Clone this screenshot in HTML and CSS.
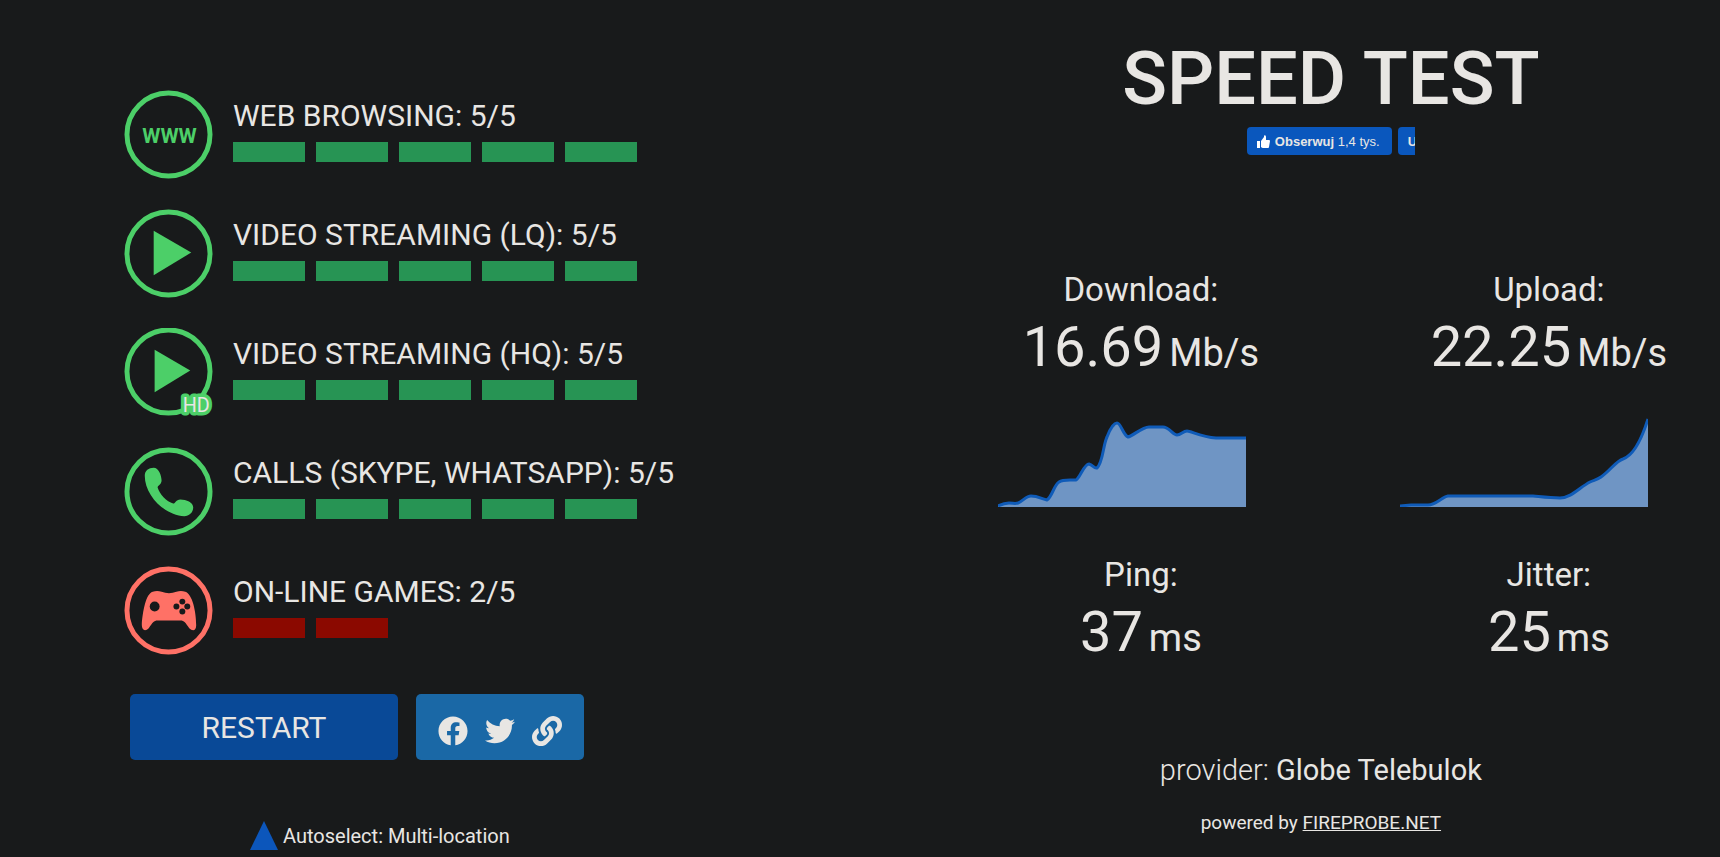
FILE: index.html
```html
<!DOCTYPE html>
<html lang="en">

<head>
    <meta charset="UTF-8">
    <meta name="viewport" content="width=device-width, initial-scale=1.0">
    <title>Speed Test</title>
    <link rel="stylesheet" href="styles.css">
</head>

<body>
    <div class="container">
        <main class="quality">
            <ul class="quality-list">
                <li class="quality-item">
                    <svg class="quality-icon" viewBox="0 0 90 90">
                        <circle class="ring" cx="45" cy="45" r="42" />
                        <text class="www" x="46" y="54">WWW</text>
                    </svg>
                    <div class="quality-info">
                        <h2>WEB BROWSING: 5/5</h2>
                        <div class="bars"><i></i><i></i><i></i><i></i><i></i></div>
                    </div>
                </li>
                <li class="quality-item">
                    <svg class="quality-icon" viewBox="0 0 90 90">
                        <circle class="ring" cx="45" cy="45" r="42" />
                        <path d="M30 22 L68 44 L30 67 Z" />
                    </svg>
                    <div class="quality-info">
                        <h2>VIDEO STREAMING (LQ): 5/5</h2>
                        <div class="bars"><i></i><i></i><i></i><i></i><i></i></div>
                    </div>
                </li>
                <li class="quality-item">
                    <svg class="quality-icon" viewBox="0 0 90 90">
                        <circle class="ring" cx="45" cy="44" r="42" />
                        <path d="M31 22 L67 43 L31 65 Z" />
                        <text class="hd" x="73" y="85">HD</text>
                    </svg>
                    <div class="quality-info">
                        <h2>VIDEO STREAMING (HQ): 5/5</h2>
                        <div class="bars"><i></i><i></i><i></i><i></i><i></i></div>
                    </div>
                </li>
                <li class="quality-item">
                    <svg class="quality-icon" viewBox="0 0 90 90">
                        <circle class="ring" cx="45" cy="45" r="42" />
                        <path d="M21 29 C21 24 25 21 30 21 C35 21 38 29 38 34 C38 38 34 39 34 41 C36 48 43 55 49 57 C52 58 52 53 57 53 C63 53 70 56 70 61 C70 66 66 70 61 70 C41 69 21 49 21 29 Z" />
                    </svg>
                    <div class="quality-info">
                        <h2>CALLS (SKYPE, WHATSAPP): 5/5</h2>
                        <div class="bars"><i></i><i></i><i></i><i></i><i></i></div>
                    </div>
                </li>
                <li class="quality-item bad">
                    <svg class="quality-icon" viewBox="0 0 90 90">
                        <circle class="ring" cx="45" cy="45" r="42" />
                        <path d="M29 26 C32 25 35 25 38 26 C43 28 48 28 53 26 C56 25 59 25 62 26 C69 28 73 46 73 60 C73 66 69 66 66 63 C62 57 61 55 57 55 L34 55 C30 55 29 57 25 63 C22 66 18 66 18 59 C19 46 22 28 29 26 Z" />
                        <g class="holes">
                            <circle cx="31" cy="41" r="5" />
                            <circle cx="59" cy="36" r="3" />
                            <circle cx="59" cy="46" r="3" />
                            <circle cx="53" cy="41" r="3" />
                            <circle cx="64" cy="41" r="3" />
                        </g>
                    </svg>
                    <div class="quality-info">
                        <h2>ON-LINE GAMES: 2/5</h2>
                        <div class="bars"><i></i><i></i></div>
                    </div>
                </li>
            </ul>

            <div class="actions">
                <button type="button" class="restart">RESTART</button>
                <div class="share">
                    <a href="#" aria-label="Facebook">
                        <svg viewBox="0 0 512 512"><path d="M504 256C504 119 393 8 256 8S8 119 8 256c0 123.780 90.690 226.380 209.250 245V327.690h-63V256h63v-54.640c0-62.150 37-96.480 93.670-96.480 27.140 0 55.520 4.840 55.520 4.840v61h-31.280c-30.800 0-40.410 19.120-40.410 38.730V256h68.780l-11 71.690h-57.780V501C413.310 482.380 504 379.780 504 256z" /></svg>
                    </a>
                    <a href="#" aria-label="Twitter">
                        <svg viewBox="0 0 512 512"><path d="M459.370 151.716c.325 4.548.325 9.097.325 13.645 0 138.720-105.583 298.558-298.558 298.558-59.452 0-114.680-17.219-161.137-47.106 8.447.974 16.568 1.299 25.340 1.299 49.055 0 94.213-16.568 130.274-44.832-46.132-.975-84.792-31.188-98.112-72.772 6.498.974 12.995 1.624 19.818 1.624 9.421 0 18.843-1.300 27.614-3.573-48.081-9.747-84.143-51.980-84.143-102.985v-1.299c13.969 7.797 30.214 12.670 47.431 13.319-28.264-18.843-46.781-51.005-46.781-87.391 0-19.492 5.197-37.360 14.294-52.954 51.655 63.675 129.300 105.258 216.365 109.807-1.624-7.797-2.599-15.918-2.599-24.040 0-57.828 46.782-104.934 104.934-104.934 30.213 0 57.502 12.670 76.670 33.137 23.715-4.548 46.456-13.320 66.599-25.340-7.798 24.366-24.366 44.833-46.132 57.827 21.117-2.273 41.584-8.122 60.426-16.243-14.292 20.791-32.161 39.308-52.628 54.253z" /></svg>
                    </a>
                    <a href="#" aria-label="Copy link">
                        <svg viewBox="0 0 512 512"><path d="M326.612 185.391c59.747 59.809 58.927 155.698.360 214.590-.110.120-.240.250-.360.370l-67.200 67.200c-59.270 59.270-155.699 59.262-214.960 0-59.270-59.260-59.270-155.700 0-214.960l37.106-37.106c9.840-9.840 26.786-3.300 27.294 10.606.648 17.722 3.826 35.527 9.690 52.721 1.986 5.822.567 12.262-3.783 16.612l-13.087 13.087c-28.026 28.026-28.905 73.660-1.155 101.960 28.024 28.579 74.086 28.749 102.325.510l67.200-67.190c28.191-28.191 28.073-73.757 0-101.830-3.701-3.694-7.429-6.564-10.341-8.569a16.037 16.037 0 0 1-6.947-12.606c-.396-10.567 3.348-21.456 11.698-29.806l21.054-21.055c5.521-5.521 14.182-6.199 20.584-1.731a152.482 152.482 0 0 1 20.522 17.197zM467.547 44.449c-59.261-59.262-155.690-59.270-214.960 0l-67.200 67.200c-.120.120-.250.250-.360.370-58.566 58.892-59.387 154.781.360 214.590a152.454 152.454 0 0 0 20.521 17.196c6.402 4.468 15.064 3.789 20.584-1.731l21.054-21.055c8.350-8.350 12.094-19.239 11.698-29.806a16.037 16.037 0 0 0-6.947-12.606c-2.912-2.005-6.640-4.875-10.341-8.569-28.073-28.073-28.191-73.639 0-101.830l67.200-67.190c28.239-28.239 74.300-28.069 102.325.510 27.750 28.300 26.872 73.934-1.155 101.960l-13.087 13.087c-4.350 4.350-5.769 10.790-3.783 16.612 5.864 17.194 9.042 34.999 9.690 52.721.509 13.906 17.454 20.446 27.294 10.606l37.106-37.106c59.271-59.259 59.271-155.699.001-214.959z" /></svg>
                    </a>
                </div>
            </div>

            <div class="location">
                <span class="triangle"></span>
                <span>Autoselect: Multi-location</span>
            </div>
        </main>

        <aside class="results">
            <h1>SPEED TEST</h1>
            <div class="fb-widget">
                <button type="button" class="fb-follow">
                    <svg viewBox="0 0 13 13"><path d="M0 6h3v7H0z M4 6 L7 2 V1 C7 0 9 0 9 2 V5 H12 Q13 5 13 6 L12 12 Q12 13 11 13 H6 Q5 13 4 12 Z" /></svg>
                    <span><b>Obserwuj</b> 1,4 tys.</span>
                </button>
                <!-- the widget frame is narrower than its buttons -->
                <button type="button" class="fb-share">Udostępnij</button>
            </div>

            <div class="metrics">
                <div class="metric">
                    <h3>Download:</h3>
                    <p><span class="value">16.69</span><span>Mb/s</span></p>
                </div>
                <div class="metric">
                    <h3>Upload:</h3>
                    <p><span class="value">22.25</span><span>Mb/s</span></p>
                </div>
            </div>

            <div class="charts">
                <svg class="chart" viewBox="0 0 248 90">
                    <path class="area" d="M0 89 C4 87 7 86 11 86 C15 86 17 87 20 86 C25 84 28 79 33 79 C40 79 44 82 49 83 C54 80 56 68 61 65 C65 62 72 63 78 63 C82 61 86 47 91 47 C95 48 96 52 99 51 C105 46 105 28 109 20 C112 12 116 6 119 6 C123 6 125 18 130 20 C135 19 144 10 151 10 L165 10 C171 10 175 18 179 18 C183 18 185 14 189 14 C193 14 203 20 218 21 L248 21 V90 H0 Z" />
                    <path class="line" d="M0 89 C4 87 7 86 11 86 C15 86 17 87 20 86 C25 84 28 79 33 79 C40 79 44 82 49 83 C54 80 56 68 61 65 C65 62 72 63 78 63 C82 61 86 47 91 47 C95 48 96 52 99 51 C105 46 105 28 109 20 C112 12 116 6 119 6 C123 6 125 18 130 20 C135 19 144 10 151 10 L165 10 C171 10 175 18 179 18 C183 18 185 14 189 14 C193 14 203 20 218 21 L248 21" />
                </svg>
                <svg class="chart" viewBox="0 0 248 90">
                    <path class="area" d="M0 89 L11 88 H28 C36 88 42 80 48 79 H133 C143 80 150 81 160 81 C171 81 180 70 190 65 C194 63 197 63 201 60 C210 54 216 44 223 42 C235 38 243 18 248 2 V90 H0 Z" />
                    <path class="line" d="M0 89 L11 88 H28 C36 88 42 80 48 79 H133 C143 80 150 81 160 81 C171 81 180 70 190 65 C194 63 197 63 201 60 C210 54 216 44 223 42 C235 38 243 18 248 2" />
                </svg>
            </div>

            <div class="metrics">
                <div class="metric">
                    <h3>Ping:</h3>
                    <p><span class="value">37</span><span>ms</span></p>
                </div>
                <div class="metric">
                    <h3>Jitter:</h3>
                    <p><span class="value">25</span><span>ms</span></p>
                </div>
            </div>

            <footer>
                <p class="provider">provider: <b>Globe Telebulok</b></p>
                <p class="powered">powered by <a href="#">FIREPROBE.NET</a></p>
            </footer>
        </aside>
    </div>
</body>

</html>
```
FILE: styles.css
```css
* {
    padding: 0;
    margin: 0;
    box-sizing: border-box;
}

body {
    background-color: #181a1b;
    color: #e8e6e3;
    font-family: Roboto, "Liberation Sans", sans-serif;
}

.container {
    display: grid;
    grid-template-columns: 121fr 100fr;
    min-height: 100vh;
}

/* left side */

.quality {
    padding: 90px 0 0 124px;
}

.quality-list {
    list-style: none;
    display: flex;
    flex-direction: column;
    gap: 30px;
}

.quality-item {
    display: flex;
    gap: 20px;
    height: 89px;
    color: #4ccf68;
}

.quality-item.bad {
    color: #ff7166;
}

.quality-icon {
    width: 89px;
    height: 89px;
    fill: currentColor;
}

.ring {
    fill: none;
    stroke: currentColor;
    stroke-width: 5;
}

.holes {
    fill: #181a1b;
}

.www {
    font-family: "Liberation Sans Narrow", Roboto, sans-serif;
    font-size: 21px;
    font-weight: bold;
    text-anchor: middle;
}

.hd {
    font-size: 20px;
    text-anchor: middle;
    fill: #e8e6e3;
    stroke: #4ccf68;
    stroke-width: 7;
    stroke-linejoin: round;
    paint-order: stroke;
}

.quality-info {
    padding-top: 8px;
}

.quality-info h2 {
    color: #e8e6e3;
    font-size: 30px;
    font-weight: 400;
    line-height: 36px;
    white-space: nowrap;
}

.bars {
    display: flex;
    gap: 11px;
    margin-top: 8px;
}

.bars i {
    width: 72px;
    height: 20px;
    background-color: #279454;
}

.bad .bars i {
    background-color: #8b0900;
}

.actions {
    display: flex;
    gap: 18px;
    margin: 39px 0 0 6px;
}

.restart {
    width: 268px;
    height: 66px;
    border: none;
    border-radius: 5px;
    background-color: #094997;
    color: #e8e6e3;
    font-family: inherit;
    font-size: 30px;
}

.share {
    width: 168px;
    height: 66px;
    padding-top: 8px;
    border-radius: 5px;
    background-color: #1a68a6;
    display: flex;
    align-items: center;
    justify-content: center;
    gap: 17px;
}

.share a,
.share svg {
    display: block;
    width: 30px;
    height: 30px;
    fill: #e8e6e3;
}

.location {
    display: flex;
    align-items: center;
    gap: 5px;
    margin: 61px 0 0 126px;
    font-size: 20px;
}

.triangle {
    border-left: 14px solid transparent;
    border-right: 14px solid transparent;
    border-bottom: 29px solid #0c56bb;
}

/* right side */

.results {
    padding-top: 34px;
    text-align: center;
}

h1 {
    font-size: 74px;
    font-weight: 500;
    line-height: 90px;
}

.fb-widget {
    width: 168px;
    height: 28px;
    margin: 3px auto 0;
    display: flex;
    gap: 6px;
    overflow: hidden;
}

.fb-widget button {
    flex: none;
    padding: 0 10px;
    border: none;
    border-radius: 4px;
    background-color: #0a57bd;
    color: #e8e6e3;
    font-family: "Liberation Sans", sans-serif;
    font-size: 13px;
    white-space: nowrap;
}

.fb-follow {
    width: 145px;
    display: flex;
    align-items: center;
    gap: 5px;
}

.fb-widget .fb-share {
    font-weight: bold;
}

.fb-follow svg {
    flex: none;
    width: 13px;
    height: 13px;
    fill: #fff;
}

.metrics {
    display: grid;
    grid-template-columns: 300px 300px;
    justify-content: center;
    gap: 108px;
    padding-left: 28px;
    margin-top: 115px;
}

.metric h3 {
    font-size: 33px;
    font-weight: 400;
    line-height: 40px;
}

.metric p {
    display: flex;
    align-items: baseline;
    justify-content: center;
    gap: 6px;
    font-size: 38px;
    line-height: 74px;
    white-space: nowrap;
}

.value {
    font-size: 56px;
}

.charts {
    display: flex;
    justify-content: center;
    gap: 154px;
    padding-right: 16px;
    margin-top: 27px;
}

.chart {
    width: 248px;
    height: 90px;
}

.area {
    fill: #6f95c4;
}

.line {
    fill: none;
    stroke: #0f5bb8;
    stroke-width: 3;
}

.charts + .metrics {
    margin-top: 48px;
}

footer {
    padding-right: 20px;
    margin-top: 77px;
}

.provider {
    font-size: 29px;
    font-weight: 300;
    line-height: 36px;
}

.provider b {
    font-weight: 400;
}

.powered {
    margin-top: 23px;
    font-size: 19px;
    line-height: 24px;
}

.powered a {
    color: inherit;
}
```
